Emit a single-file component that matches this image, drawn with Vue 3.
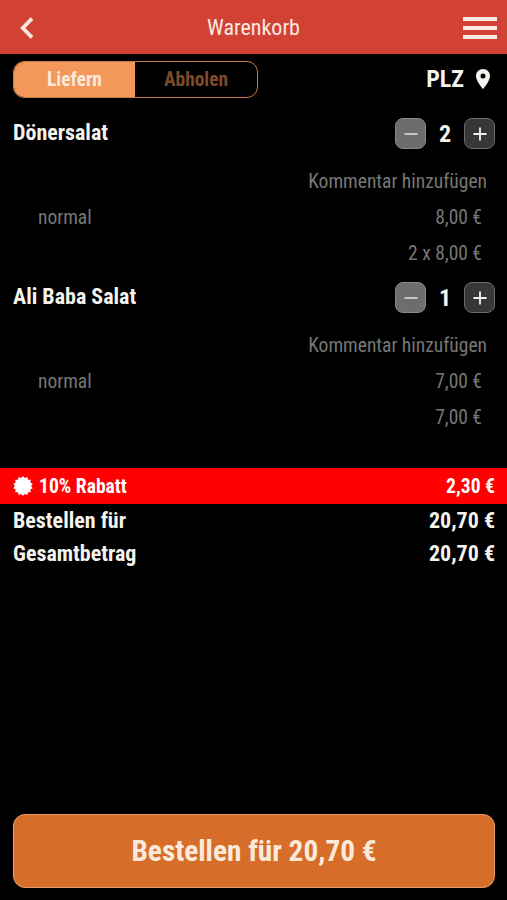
<script setup>
import { computed, ref } from 'vue'

const mode = ref('liefern')

const items = ref([
    { id: 0, name: 'Dönersalat', variant: 'normal', price: 8, quantity: 2 },
    { id: 1, name: 'Ali Baba Salat', variant: 'normal', price: 7, quantity: 1 },
])

const subtotal = computed(() => items.value.reduce((sum, item) => sum + item.price * item.quantity, 0))
const discount = computed(() => subtotal.value * 0.1)
const total = computed(() => subtotal.value - discount.value)

// spikes of the discount badge
const badge_points = Array.from({ length: 28 }, (_, i) => {
    const r = i % 2 ? 8.1 : 10
    const a = (i * Math.PI) / 14
    return (10 + r * Math.sin(a)).toFixed(2) + ',' + (10 - r * Math.cos(a)).toFixed(2)
}).join(' ')

function euro(value)
{
    return value.toFixed(2).replace('.', ',') + ' €'
}

function line_total(item)
{
    return item.quantity > 1 ? item.quantity + ' x ' + euro(item.price) : euro(item.price)
}

function add_quantum(item)
{
    item.quantity++
}

function minus_quantum(item)
{
    if (item.quantity > 1) {
        item.quantity--
    } else {
        items.value = items.value.filter(i => i !== item)
    }
}
</script>

<template>
    <div class="page">
        <header class="topbar">
            <svg class="back" viewBox="0 0 14 22">
                <path d="M12 1.5 L2.8 11 L12 20.5" fill="none" stroke="currentColor" stroke-width="3.8" />
            </svg>
            <span class="title">Warenkorb</span>
            <div class="burger">
                <i></i><i></i><i></i>
            </div>
        </header>

        <div class="options">
            <div class="switch">
                <div class="tab" :class="{ active: mode === 'liefern' }" @click="mode = 'liefern'">Liefern</div>
                <div class="tab" :class="{ active: mode === 'abholen' }" @click="mode = 'abholen'">Abholen</div>
            </div>
            <div class="plz">
                <span>PLZ</span>
                <svg class="pin" viewBox="0 0 14 20">
                    <path fill-rule="evenodd" fill="currentColor" d="M7 0 C3.1 0 0 3.1 0 7 C0 12.2 7 20 7 20 C7 20 14 12.2 14 7 C14 3.1 10.9 0 7 0 Z M7 4.5 A2.5 2.5 0 1 1 7 9.5 A2.5 2.5 0 1 1 7 4.5 Z" />
                </svg>
            </div>
        </div>

        <div class="item" v-for="item in items" :key="item.id">
            <div class="item_head">
                <span class="item_name">{{ item.name }}</span>
                <div class="quantum">
                    <button class="minus" @click="minus_quantum(item)">
                        <svg viewBox="0 0 14 14"><path d="M0.5 7 H13.5" stroke="currentColor" stroke-width="1.8" /></svg>
                    </button>
                    <span class="count">{{ item.quantity }}</span>
                    <button class="plus" @click="add_quantum(item)">
                        <svg viewBox="0 0 14 14"><path d="M0.5 7 H13.5 M7 0.5 V13.5" stroke="currentColor" stroke-width="1.8" /></svg>
                    </button>
                </div>
            </div>
            <div class="comment">Kommentar hinzufügen</div>
            <div class="line">
                <span>{{ item.variant }}</span>
                <span>{{ euro(item.price) }}</span>
            </div>
            <div class="line">
                <span></span>
                <span>{{ line_total(item) }}</span>
            </div>
        </div>

        <div class="discount">
            <svg class="badge" viewBox="0 0 20 20"><polygon :points="badge_points" fill="currentColor" /></svg>
            <span class="discount_name">10% Rabatt</span>
            <span>{{ euro(discount) }}</span>
        </div>
        <div class="sum">
            <span>Bestellen für</span>
            <span>{{ euro(total) }}</span>
        </div>
        <div class="sum">
            <span>Gesamtbetrag</span>
            <span>{{ euro(total) }}</span>
        </div>

        <button class="order">Bestellen für {{ euro(total) }}</button>
    </div>
</template>

<style>
body {
    background: #000;
}
</style>

<style scoped>
.page {
    box-sizing: border-box;
    width: 100%;
    height: 900px;
    padding-bottom: 12px;
    display: flex;
    flex-direction: column;
    overflow: hidden;
    background: #000;
    color: #f4f3ee;
    font-family: "Roboto Condensed", Roboto, sans-serif;
    font-stretch: 75%;
    font-weight: 700;
    font-size: 22px;
}

.topbar {
    display: grid;
    grid-template-columns: 60px 1fr 60px;
    align-items: center;
    height: 54px;
    flex: none;
    background: #d14235;
    color: #fbe9e0;
}

.back {
    width: 14px;
    height: 22px;
    margin-left: 20px;
    margin-top: 2px;
}

.title {
    padding-top: 1px;
    text-align: center;
    font-weight: 450;
}

.burger {
    display: flex;
    flex-direction: column;
    gap: 5px;
    justify-self: end;
    width: 34px;
    margin-right: 10px;
    margin-top: 2px;
}

.burger i {
    height: 4px;
    background: currentColor;
}

.options {
    display: flex;
    justify-content: space-between;
    align-items: center;
    height: 36px;
    flex: none;
    margin: 7px 17px 11px 13px;
}

.switch {
    box-sizing: border-box;
    display: flex;
    width: 245px;
    height: 37px;
    border: 1px solid #c67a43;
    border-radius: 11px;
    overflow: hidden;
}

.tab {
    flex: 1;
    line-height: 36px;
    text-align: center;
    font-size: 19.4px;
    color: #7d4b2b;
}

.tab:first-child {
    flex: none;
    width: 121px;
}

.tab.active {
    background: #f3975b;
    color: #fbeadb;
}

.plz {
    display: flex;
    align-items: center;
    gap: 12px;
    font-size: 24px;
}

.pin {
    width: 14px;
    height: 20px;
    margin-bottom: 1px;
}

.item {
    display: flex;
    flex-direction: column;
    flex: none;
    padding-top: 9px;
}

.item_head {
    display: flex;
    justify-content: space-between;
    align-items: flex-start;
    height: 36px;
    padding: 0 12px 0 13px;
}

.item_name {
    line-height: 32px;
}

.quantum {
    display: flex;
    align-items: center;
    padding-top: 1px;
}

.quantum button {
    box-sizing: border-box;
    display: flex;
    align-items: center;
    justify-content: center;
    width: 31px;
    height: 31px;
    padding: 0;
    border: 1px solid #6c6c6c;
    border-radius: 8px;
    background: #373737;
    color: #f4f3ee;
}

.quantum .minus {
    background: #6d6d6d;
    border-color: #8a8a8a;
    color: #d0d0cc;
}

.quantum svg {
    width: 14px;
    height: 14px;
}

.count {
    width: 38px;
    text-align: center;
    font-size: 24px;
}

.comment {
    margin-top: 11px;
    padding-right: 20px;
    line-height: 36px;
    text-align: right;
    font-weight: 400;
    font-size: 19.5px;
    color: #777774;
}

.line {
    display: flex;
    justify-content: space-between;
    padding: 0 25px 0 38px;
    line-height: 36px;
    font-weight: 400;
    font-size: 19.5px;
    color: #777774;
}

.discount {
    display: flex;
    align-items: center;
    height: 36px;
    flex: none;
    margin-top: 32px;
    padding: 0 12px 0 13px;
    background: #fe0000;
    color: #fff;
    font-size: 19.6px;
}

.badge {
    width: 20px;
    height: 20px;
    margin-right: 6px;
}

.discount_name {
    flex: 1;
}

.sum {
    display: flex;
    justify-content: space-between;
    padding: 0 12px 0 13px;
    line-height: 33px;
}

.order {
    box-sizing: border-box;
    height: 74px;
    flex: none;
    margin: auto 12px 0 13px;
    padding: 0;
    border: 1px solid #e79a68;
    border-radius: 12px;
    background: #d66e29;
    color: #fbeadb;
    font: inherit;
    font-size: 29.3px;
}
</style>
